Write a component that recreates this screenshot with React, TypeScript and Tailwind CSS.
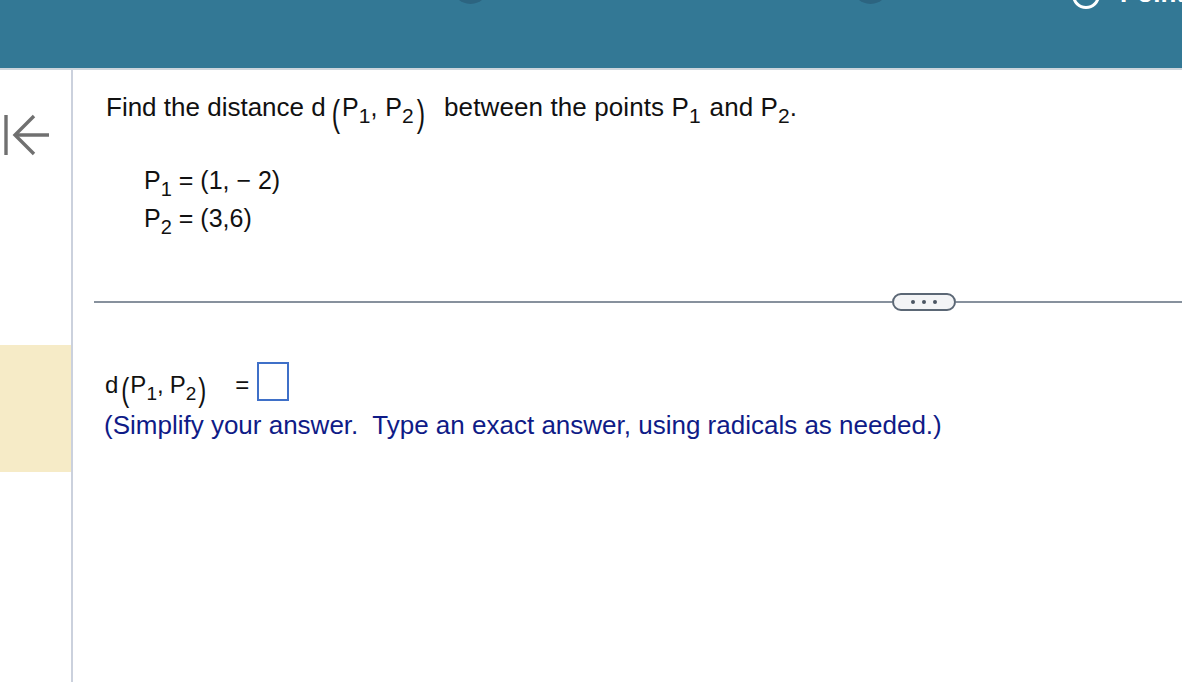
import React from "react";

const font = { fontFamily: '"Liberation Sans", Arial, Helvetica, sans-serif' };

function Sub({ children, size = "text-[21px]", shift = "align-[-7px]" }: { children: React.ReactNode; size?: string; shift?: string }) {
  return <span className={`${size} ${shift} leading-[0]`}>{children}</span>;
}

function Paren({ ch, cls }: { ch: string; cls: string }) {
  return <span className={`inline-block ${cls}`}>{ch}</span>;
}

export default function App() {
  return (
    <div className="w-[1182px] h-[682px] overflow-hidden bg-white flex flex-col" style={font}>
      {/* Header */}
      <div className="h-[70px] shrink-0 bg-[#337895] border-b-2 border-[#cdd5dc] overflow-hidden flex items-start pl-[452px]">
        <div className="w-[37px] h-[37px] -mt-[33px] rounded-full bg-[#2c6480] shrink-0" />
        <div className="ml-[363px] w-[37px] h-[37px] -mt-[33px] rounded-full bg-[#2c6480] shrink-0" />
        <div className="ml-[183px] w-[28px] h-[28px] -mt-[19px] rounded-full border-[3px] border-white shrink-0" />
        <div className="ml-[20px] -mt-[20px] text-white font-bold text-[26px] leading-[26px] whitespace-nowrap">Points</div>
      </div>

      <div className="flex flex-1 min-h-0">
        {/* Sidebar */}
        <div className="w-[73px] shrink-0 border-r-2 border-[#cbd1dd] flex flex-col">
          <div className="mt-[43px] pl-[3px]">
            <svg width="50" height="44" viewBox="0 0 50 44" fill="none" stroke="#707070" strokeWidth="3.4" strokeLinecap="butt">
              <line x1="3" y1="2" x2="3" y2="42" />
              <line x1="12" y1="22" x2="46" y2="22" />
              <polyline points="31,3 12,22 31,41" strokeLinejoin="miter" />
            </svg>
          </div>
          <div className="mt-[188px] h-[127px] w-[71px] bg-[#f6ebc7]" />
        </div>

        {/* Content */}
        <div className="flex-1 min-w-0 flex flex-col text-[#111]">
          <div className="pl-[33px] pt-[22px] text-[26px] leading-[30px] whitespace-nowrap">
            Find the distance d
            <Paren ch="(" cls="ml-[6px] text-[25px] scale-y-[1.45] translate-y-[6px]" />
            <span className="text-[25px] ml-[2px]">P</span>
            <Sub>1</Sub>
            <span className="text-[25px]">,</span>
            <span className="text-[25px] ml-[8px]">P</span>
            <Sub>2</Sub>
            <Paren ch=")" cls="ml-[3px] text-[25px] scale-y-[1.45] translate-y-[6px]" />
            <span className="ml-[19px] tracking-[0.1px]">between the points P</span>
            <Sub>1</Sub>
            <span className="ml-[9px] tracking-[0.1px]">and P</span>
            <Sub>2</Sub>
            <span>.</span>
          </div>

          <div className="pl-[71px] mt-[39px] text-[25px] leading-[38px] whitespace-nowrap">
            <div>
              P<Sub size="text-[20px]">1</Sub> = (1, − 2)
            </div>
            <div>
              P<Sub size="text-[20px]">2</Sub> = (3,6)
            </div>
          </div>

          {/* Divider */}
          <div className="mt-[56px] ml-[21px] h-[18px] flex items-center">
            <div className="w-[798px] h-[2px] bg-[#87919d]" />
            <div className="w-[64px] h-[18px] shrink-0 rounded-full border-2 border-[#5b6775] bg-[#f3f4f6] flex items-center justify-center gap-[7px]">
              <span className="w-[4px] h-[4px] rounded-full bg-[#4b5563]" />
              <span className="w-[4px] h-[4px] rounded-full bg-[#4b5563]" />
              <span className="w-[4px] h-[4px] rounded-full bg-[#4b5563]" />
            </div>
            <div className="flex-1 h-[2px] bg-[#87919d]" />
          </div>

          {/* Answer */}
          <div className="mt-[51px] pl-[32px] flex items-start whitespace-nowrap">
            <div className="text-[24px] leading-[45px]">
              d
              <Paren ch="(" cls="ml-[3px] text-[24px] scale-y-[1.4] translate-y-[5px]" />
              <span className="ml-[1px]">P</span>
              <Sub size="text-[19px]" shift="align-[-7px]">1</Sub>
              <span>,</span>
              <span className="ml-[6px]">P</span>
              <Sub size="text-[19px]" shift="align-[-7px]">2</Sub>
              <Paren ch=")" cls="ml-[2px] text-[24px] scale-y-[1.4] translate-y-[5px]" />
              <span className="ml-[29px]">=</span>
            </div>
            <div className="ml-[8px] w-[32px] h-[39px] border-2 border-[#3f70c8] bg-white" />
          </div>

          <div className="mt-[3px] pl-[31px] text-[26px] leading-[30px] text-[#0f1b87] whitespace-nowrap">
            (Simplify your answer.&nbsp; Type an exact answer, using radicals as needed.)
          </div>
        </div>
      </div>
    </div>
  );
}
